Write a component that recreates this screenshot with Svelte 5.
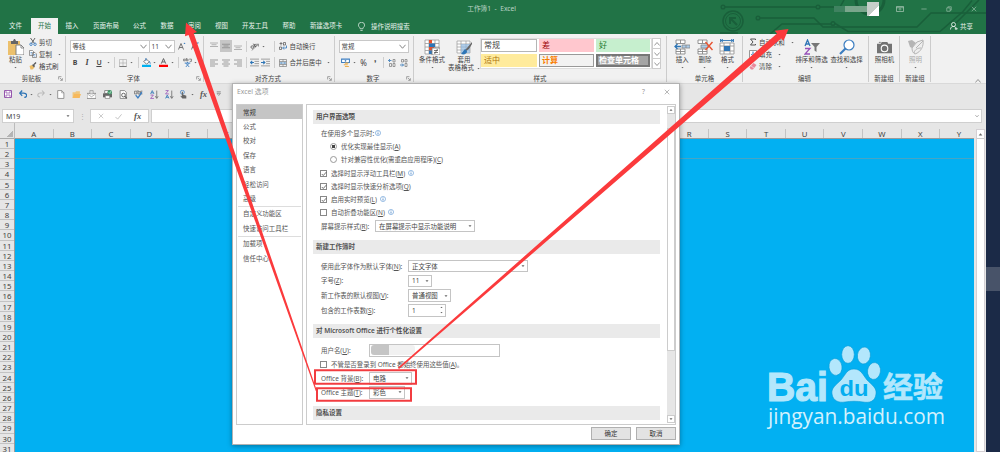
<script lang="ts">
  type Slot = { icon?: string; text?: string; w: number; size?: number; cls?: string };

  const TABS = [
    { label: '文件', w: 31 },
    { label: '开始', w: 27, active: true },
    { label: '插入', w: 28 },
    { label: '页面布局', w: 40 },
    { label: '公式', w: 27 },
    { label: '数据', w: 28 },
    { label: '审阅', w: 27 },
    { label: '视图', w: 27 },
    { label: '开发工具', w: 40 },
    { label: '帮助', w: 28 },
    { label: '新建选项卡', w: 46 },
  ];

  // every icon is drawn on a 16x16 grid
  const ICONS: Record<string, string> = {
    caret: '<path d="M2 5h12l-6 7z" fill="#666"/>',
    chevron: '<path d="M1 4l7 8 7-8" fill="none" stroke="#666" stroke-width="1.8"/>',
    chevronUp: '<path d="M1 12l7-8 7 8" fill="none" stroke="#777" stroke-width="2"/>',
    sep: '<path d="M8 0v16" stroke="#ccc" stroke-width="1.4"/>',
    launcher: '<path d="M2 11V2h9" fill="none" stroke="#777" stroke-width="2"/><path d="M6 6l7 7M14 7v7H7" fill="none" stroke="#777" stroke-width="2"/>',
    paste: '<rect x="0" y="2" width="12" height="14" fill="#ecc06c"/><path d="M3 2h2l1-2h1l1 2h2v3H3z" fill="#666"/><path d="M8 6h5l3 3v7H8z" fill="#fff" stroke="#777" stroke-width=".9"/><path d="M13 6v3h3" fill="none" stroke="#777" stroke-width=".8"/>',
    cut: '<path d="M3 0l8 11M12 0L5 11" stroke="#555" stroke-width="1.8"/><circle cx="4" cy="12.5" r="2.5" fill="none" stroke="#3e7fc2" stroke-width="1.8"/><circle cx="12" cy="12.5" r="2.5" fill="none" stroke="#3e7fc2" stroke-width="1.8"/>',
    copy: '<path d="M1 1h6l2 2v8H1zM7 5h5l3 3v7H7z" fill="#fff" stroke="#666" stroke-width="1.3"/><path d="M3 5h3M3 8h3M9 9h4M9 12h4" stroke="#3e7fc2" stroke-width="1.3"/>',
    brush: '<path d="M1 8l5-2 5 5-4 4-4 0z" fill="#ecbd65"/><path d="M6 6l3-2 3 4-2 3z" fill="#555"/><path d="M10 5l4-4" stroke="#555" stroke-width="2.5"/>',
    growA: '<path d="M1 15L6 3l5 12M3 11h6" fill="none" stroke="#555" stroke-width="1.6"/><path d="M11 4l2-3 2 3z" fill="#3e7fc2"/>',
    shrinkA: '<path d="M1 15L5 5l4 10M3 11h5" fill="none" stroke="#555" stroke-width="1.6"/><path d="M11 1h5l-2.5 3z" fill="#3e7fc2"/>',
    border: '<path d="M1 1h14v14H1zM8 1v14M1 8h14" fill="none" stroke="#aaa" stroke-width="1.2"/><path d="M1 15h14" stroke="#666" stroke-width="1.6"/>',
    fill: '<path d="M3 6l5-4 5 5-5 4z" fill="#fff" stroke="#555" stroke-width="1.3"/><path d="M7 0v5M13 6l2 4" stroke="#3e7fc2" stroke-width="1.8"/><rect y="12" width="16" height="4" fill="#00b0f0"/>',
    fontColor: '<path d="M4 10L8 1l4 9M5.500 7h5" fill="none" stroke="#555" stroke-width="1.6"/><rect y="12" width="16" height="4" fill="#f00"/>',
    phonetic: '<path d="M1 2h3v3H1zM6 0v5h3V2H6M11 2h4v4h-3" fill="none" stroke="#666" stroke-width="1.3"/><path d="M3 9h10M8 7v2M5 9l6 7M11 9l-6 7" fill="none" stroke="#3e7fc2" stroke-width="1.6"/>',
    top: '<path d="M0 2h16M3 5.500h10M0 9h16" stroke="#888" stroke-width="1.2"/>',
    middle: '<path d="M0 4.500h16M3 8h10M0 11.500h16" stroke="#777" stroke-width="1.2"/>',
    bottom: '<path d="M0 8h16M3 11.500h10M0 15h16" stroke="#888" stroke-width="1.2"/>',
    left: '<path d="M0 2h16M0 6h10M0 10h16M0 14h10" stroke="#777" stroke-width="1.4"/>',
    center: '<path d="M0 2h16M3 6h10M0 10h16M3 14h10" stroke="#777" stroke-width="1.4"/>',
    right: '<path d="M0 2h16M6 6h10M0 10h16M6 14h10" stroke="#777" stroke-width="1.4"/>',
    orient: '<path d="M3 15L15 4M11 4h4v4" fill="none" stroke="#777" stroke-width="1.4"/><circle cx="4" cy="9" r="2.300" fill="none" stroke="#555" stroke-width="1.4"/><path d="M6 3l4 6" stroke="#555" stroke-width="1.5"/><circle cx="9" cy="6" r="2" fill="none" stroke="#555" stroke-width="1.3"/>',
    outdent: '<path d="M0 2h16M8 6h8M8 10h8M0 14h16" stroke="#888" stroke-width="1.4"/><path d="M7 8H1M4 5L1 8l3 3" fill="none" stroke="#2e75b6" stroke-width="1.8"/>',
    indent: '<path d="M0 2h16M9 6h7M9 10h7M0 14h16" stroke="#888" stroke-width="1.4"/><path d="M0 8h6M4 5l3 3-3 3" fill="none" stroke="#2e75b6" stroke-width="1.8"/>',
    wrap: '<path d="M4 0v7M1 3h6M8 6h5V1H9v5M1 10v5h4v-5H1" fill="none" stroke="#555" stroke-width="1.4"/><path d="M15 7v5H8M10 9l-3 3 3 3" fill="none" stroke="#2e75b6" stroke-width="1.6"/>',
    merge: '<path d="M1 1h14v14H1zM1 5h14M1 11h14M8 1v4M8 11v4" fill="none" stroke="#777" stroke-width="1.3"/><path d="M3 8h10M5 6L3 8l2 2M11 6l2 2-2 2" fill="none" stroke="#2e75b6" stroke-width="1.3"/>',
    currency: '<path d="M1 2h14v6H1z" fill="#fff" stroke="#3e7fc2" stroke-width="1.8"/><circle cx="8" cy="5" r="1.500" fill="#3e7fc2"/><path d="M7 8h6v2H7zM5 11h7v2H5zM7 14h7v2H7z" fill="#ebaf50"/>',
    decInc: '<path d="M7 3H1M4 0L1 3l3 3" fill="none" stroke="#2e75b6" stroke-width="1.6"/><path d="M10 1h4v5h-4zM3 9h4v6H3zM10 9h4v6h-4z" fill="none" stroke="#777" stroke-width="1.4"/>',
    decDec: '<path d="M3 1h4v5H3zM10 1h4v5h-4zM10 9h4v6h-4z" fill="none" stroke="#777" stroke-width="1.4"/><path d="M0 12h7M4 9l3 3-3 3" fill="none" stroke="#2e75b6" stroke-width="1.6"/>',
    cond: '<path d="M1 1h14v14H1zM1 4.500h14M1 8h14M1 11.500h14M5 1v14M11 1v14" fill="#fff" stroke="#999" stroke-width=".8"/><path d="M5 1h3v3.500H5zM5 8h5v3.500H5z" fill="#e8512f"/><path d="M5 4.500h6V8H5zM5 11.500h3V15H5z" fill="#2e75b6"/><path d="M8 9h8v7H8z" fill="#fff" stroke="#777" stroke-width=".8"/><path d="M10 11.500h4M10 13.500h4M13.500 10l-3 5" stroke="#555" stroke-width=".8"/>',
    table: '<path d="M1 2h13v12H1zM1 5h13M1 8h13M1 11h13M5 2v12M10 2v12" fill="#fff" stroke="#999" stroke-width=".7"/><path d="M5 5h9v9H5z" fill="#8eb8df" opacity=".7"/><path d="M16 3l-5 6-2 2 1 1 3-2 3-5z" fill="#666"/><path d="M9 10l-4 5c3 1 6 0 6-3z" fill="#2e75b6"/>',
    insert: '<path d="M2 1h9v3.500H2zM6.500 1v3.500M2 10h9v5H2zM2 12.500h9M6.500 10v5" fill="#fff" stroke="#888" stroke-width=".9"/><path d="M8 6h8v3H8zM12 6v3" fill="#a9cbea" stroke="#888" stroke-width=".8"/><path d="M7 7.500H1M3.500 5L1 7.500 3.500 10" fill="none" stroke="#2e75b6" stroke-width="1.3"/>',
    remove: '<path d="M1 1h9v3.500H1zM5.500 1v3.500M1 10h9v5H1zM1 12.500h9M5.500 10v5" fill="#fff" stroke="#888" stroke-width=".9"/><path d="M4 6h7v3H4z" fill="#a9cbea" stroke="#888" stroke-width=".8"/><path d="M8.500 3l7 8M15.500 3l-7 8" stroke="#e8512f" stroke-width="1.400"/>',
    format: '<path d="M1 4h14v11H1zM1 7h14M1 12h14M5 4v11M11 4v11" fill="#fff" stroke="#999" stroke-width=".9"/><path d="M5 7h6v5H5z" fill="#2e75b6"/><path d="M2 1.500h12M1.500 0v3M14.500 0v3M4 0L2 1.500 4 3M12 0l2 1.500L12 3" fill="none" stroke="#2e75b6" stroke-width=".9"/>',
    sum: '<path d="M13 4V2H3l5 6-5 6h10v-2" fill="none" stroke="#555" stroke-width="2"/>',
    fillDown: '<path d="M1 1h14v14H1z" fill="#fff" stroke="#777" stroke-width="1.500"/><path d="M8 3v9M4.500 8.500L8 12l3.500-3.500" fill="none" stroke="#2e75b6" stroke-width="2"/>',
    erase: '<path d="M1 11L9 2l6 4-7 9H4z" fill="#e9889a"/><path d="M4 8l6 4" stroke="#fff"/>',
    sort: '<path d="M1 7l2.500-6L6 7M2 5h3" fill="none" stroke="#2e75b6" stroke-width="1.300"/><path d="M1 9.500h5L1 15h5" fill="none" stroke="#9751b8" stroke-width="1.300"/><path d="M7 4h9l-3.500 4v5l-2-1.500V8z" fill="#777"/>',
    find: '<circle cx="10" cy="6" r="5" fill="#fff" stroke="#3b7dc0" stroke-width="1.200"/><path d="M6.500 9.500L1 15" stroke="#3b7dc0" stroke-width="2.200"/>',
    camera: '<path d="M0 4h4l1-2h6l1 2h4v10H0z" fill="#737373"/><circle cx="8" cy="9" r="3.500" fill="#737373" stroke="#fff" stroke-width="1.200"/><path d="M2 2h2v1H2z" fill="#737373"/>',
    lamp: '<path d="M0 2l4-1 4 3-4 5-2-1z" fill="#b5b5b5"/><path d="M4 9l5-6 6-2c1 6-2 12-8 14-2-1-3-3-3-6z" fill="#eee" stroke="#b5b5b5"/><path d="M8 9l7-7M6 14c1-4 4-5 7-5" stroke="#b5b5b5" fill="none"/>',
    save: '<path d="M1 1h14v14H1z" fill="#fff" stroke="#9455ac" stroke-width="2"/><path d="M4 1h8v5H4zM4 10h8v5H4z" fill="#fff" stroke="#9455ac" stroke-width="1.600"/>',
    undo: '<path d="M2 6h7c7 0 7 8 1 8M6 1L1.500 6 6 11" fill="none" stroke="#2e75b6" stroke-width="2.400"/>',
    redo: '<path d="M14 6H7c-7 0-7 8-1 8M10 1l4.500 5L10 11" fill="none" stroke="#bbb" stroke-width="2.200"/>',
    page: '<path d="M3 1h7l4 4v10H3z" fill="#fff" stroke="#777" stroke-width="1.300"/><path d="M10 1v4h4" fill="none" stroke="#777"/>',
    folder: '<path d="M1 4h5l1-2h7v12H1z" fill="#efc67d"/><path d="M4 7h12l-3 7H1z" fill="#f7b95c"/>',
    mail: '<path d="M0 6h16v9H0z" fill="#fff" stroke="#777" stroke-width="1.300"/><path d="M2 8l6 4 6-4" fill="none" stroke="#777"/><path d="M5 1h6v6H5z" fill="#ddd" stroke="#888"/>',
    print: '<path d="M3 1h9v5H3z" fill="#fff" stroke="#666" stroke-width="1.300"/><path d="M0 6h16v7H0z" fill="#666"/><path d="M4 10h8v5H4z" fill="#fff" stroke="#666"/><circle cx="12" cy="4" r="4" fill="#3f9868"/><path d="M10 4l2 2 2-4" fill="none" stroke="#fff"/>',
    preview: '<path d="M2 1h8l3 3v11H2z" fill="#fff" stroke="#777" stroke-width="1.400"/><circle cx="8" cy="9" r="3.300" fill="#fff" stroke="#555" stroke-width="1.500"/><path d="M10 11l4 4" stroke="#555" stroke-width="2"/>',
    spell: '<path d="M1 2h4v5H1zM7 0v7h4V3H7M15 2h-3v5h3" fill="none" stroke="#666" stroke-width="1.300"/><path d="M3 9l4 5 7-10" fill="none" stroke="#3e7fc2" stroke-width="2.400"/>',
    sortAsc: '<path d="M1 7l3-6 3 6M2 5h4" fill="none" stroke="#2e75b6" stroke-width="1.400"/><path d="M1 9h5l-5 6h6" fill="none" stroke="#9751b8" stroke-width="1.400"/><path d="M12 1v13M9.500 11l2.500 4 2.500-4" fill="none" stroke="#666" stroke-width="1.400"/>',
    sortDesc: '<path d="M1 1h5L1 7h6" fill="none" stroke="#9751b8" stroke-width="1.400"/><path d="M1 15l3-6 3 6M2 13h4" fill="none" stroke="#2e75b6" stroke-width="1.400"/><path d="M12 1v13M9.500 11l2.500 4 2.500-4" fill="none" stroke="#666" stroke-width="1.400"/>',
    touch: '<circle cx="6" cy="4" r="3.500" fill="none" stroke="#3e7fc2" stroke-width="1.300"/><path d="M5 3h2v5l6 2v5H6l-4-5 3 1z" fill="#666"/>',
    more: '<path d="M2 2.500h12" stroke="#666" stroke-width="2"/><path d="M3 7h10l-5 6z" fill="#eee" stroke="#666" stroke-width="1.600"/>',
    cancel: '<path d="M2 2l12 12M14 2L2 14" stroke="#bbb" stroke-width="2"/>',
    accept: '<path d="M1 9l5 5 9-11" fill="none" stroke="#bbb" stroke-width="2"/>',
    bulb: '<path d="M5.500 12c0-3-3-3-3-6.500a5.500 5 0 0 1 11 0c0 3.500-3 3.500-3 6.500zM6 15h4" fill="none" stroke="#e5f0e9" stroke-width="1.300"/>',
    person: '<circle cx="7" cy="5" r="4" fill="none" stroke="#fff" stroke-width="1.500"/><path d="M1 15c0-5 3-6 6-6s4 1 5 3M12 11v5M9.500 13.500h6" fill="none" stroke="#fff" stroke-width="1.500"/>',
    winOpts: '<path d="M1 3h14v10H1zM1 5.500h14M8 11V7.500M6 9l2-2 2 2" fill="none" stroke="#b9d1c3" stroke-width="1.300"/>',
    winMin: '<path d="M1 8h14" stroke="#b9d1c3" stroke-width="1.500"/>',
    winRestore: '<path d="M2 5h9v9H2zM5 5V2h9v9h-3" fill="none" stroke="#b9d1c3" stroke-width="1.400"/>',
    winClose: '<path d="M2 2l12 12M14 2L2 14" stroke="#b9d1c3" stroke-width="1.400"/>',
    close: '<path d="M2 2l12 12M14 2L2 14" stroke="#888" stroke-width="1.600"/>',
    up: '<path d="M2 11h12L8 4z" fill="#666"/>',
    info: '<circle cx="8" cy="8" r="6.800" fill="#fff" stroke="#6b9fd6" stroke-width="1.800"/><path d="M8 7v5M8 4v1.700" stroke="#3f7fc4" stroke-width="2.200"/>',
    check: '<path d="M2 8l4 4 8-9" fill="none" stroke="#555" stroke-width="2.200"/>',
  };

  const QAT: Slot[] = [
    { icon: 'save', w: 16, size: 8 },
    { icon: 'undo', w: 14, size: 8.5 },
    { icon: 'caret', w: 3, size: 3 },
    { icon: 'redo', w: 16, size: 8 },
    { icon: 'caret', w: 3, size: 3 },
    { icon: 'page', w: 16, size: 9 },
    { icon: 'folder', w: 16, size: 9 },
    { icon: 'mail', w: 15.5, size: 9 },
    { icon: 'print', w: 15.5, size: 9 },
    { icon: 'preview', w: 16, size: 9 },
    { icon: 'spell', w: 15.5, size: 9 },
    { icon: 'sortAsc', w: 15.5, size: 9 },
    { icon: 'sortDesc', w: 15, size: 9 },
    { icon: 'touch', w: 12, size: 9 },
    { icon: 'caret', w: 6, size: 3 },
    { text: 'fx', w: 17, cls: 'fx' },
    { icon: 'more', w: 13, size: 5.5 },
  ];

  const FONT_ROW: Slot[] = [
    { text: 'B', w: 10, cls: 'b' },
    { text: 'I', w: 14, cls: 'i' },
    { text: 'U', w: 10, cls: 'u' },
    { icon: 'caret', w: 8, size: 3 },
    { icon: 'sep', w: 5, size: 11 },
    { icon: 'border', w: 11, size: 8 },
    { icon: 'caret', w: 7, size: 3 },
    { icon: 'sep', w: 6, size: 11 },
    { icon: 'fill', w: 10, size: 9 },
    { icon: 'caret', w: 6, size: 3 },
    { icon: 'fontColor', w: 13, size: 9 },
    { icon: 'caret', w: 5, size: 3 },
    { icon: 'sep', w: 6, size: 11 },
    { icon: 'phonetic', w: 12, size: 9 },
    { icon: 'caret', w: 5, size: 3 },
  ];

  const ALIGN_TOP: Slot[] = [
    { icon: 'top', w: 12, size: 8 },
    { icon: 'middle', w: 12, size: 8, cls: 'on' },
    { icon: 'bottom', w: 12, size: 8 },
    { icon: 'sep', w: 5, size: 11 },
    { icon: 'orient', w: 11, size: 9 },
    { icon: 'caret', w: 6, size: 3 },
    { w: 5 },
    { icon: 'sep', w: 6, size: 11 },
    { icon: 'wrap', w: 12, size: 8 },
    { text: '自动换行', w: 27 },
  ];

  const ALIGN_BOTTOM: Slot[] = [
    { icon: 'left', w: 12, size: 8 },
    { icon: 'center', w: 12, size: 8 },
    { icon: 'right', w: 12, size: 8 },
    { icon: 'sep', w: 5, size: 11 },
    { icon: 'outdent', w: 11, size: 9 },
    { icon: 'indent', w: 11, size: 9 },
    { icon: 'sep', w: 6, size: 11 },
    { icon: 'merge', w: 12, size: 8 },
    { text: '合并后居中', w: 33 },
    { icon: 'caret', w: 12, size: 3 },
  ];

  const NUMBER_ROW: Slot[] = [
    { icon: 'currency', w: 13, size: 9 },
    { icon: 'caret', w: 5, size: 3 },
    { text: '%', w: 13, cls: 'pct' },
    { text: '❜', w: 10, cls: 'pct' },
    { icon: 'sep', w: 6, size: 11 },
    { icon: 'decInc', w: 12, size: 8 },
    { icon: 'decDec', w: 12, size: 8 },
  ];

  const STYLES = [
    { name: '常规', cls: 'normal' },
    { name: '差', cls: 'bad' },
    { name: '好', cls: 'good' },
    { name: '适中', cls: 'neutral' },
    { name: '计算', cls: 'calc' },
    { name: '检查单元格', cls: 'checkcell' },
  ];

  const NAV = [
    ['常规', '公式', '校对', '保存', '语言', '轻松访问', '高级'],
    ['自定义功能区', '快速访问工具栏'],
    ['加载项', '信任中心'],
  ];

  const columns = 'ABCDEFGHIJKLMNOPQRSTUVWXY'.split('');
  const rows = Array.from({ length: 31 }, (_, i) => i + 1);

  let section = $state('常规');
  let floating = $state(true);
  let quick = $state(true);
  let preview = $state(true);
  let collapse = $state(false);
  let always = $state(false);
</script>

{#snippet icon(name: string, size = 8)}
  <svg class="icon" width={size} height={size} viewBox="0 0 16 16">{@html ICONS[name]}</svg>
{/snippet}

{#snippet slots(items: Slot[])}
  <div class="slots">
    {#each items as s}
      <span class="slot {s.cls ?? ''}" style:width="{s.w}px">
        {#if s.icon}{@render icon(s.icon, s.size)}{:else}{s.text ?? ''}{/if}
      </span>
    {/each}
  </div>
{/snippet}

{#snippet big(name: string, label: string, caret = true, size = 16)}
  <div class="big">
    <span class="pic">{@render icon(name, size)}</span>
    <span>{label}</span>
    {#if caret}{@render icon('caret', 3)}{/if}
  </div>
{/snippet}

{#snippet small(name: string, label: string, caret = false)}
  <div class="small">{@render icon(name, 8)}<span>{label}</span>{#if caret}{@render icon('caret', 3)}{/if}</div>
{/snippet}

{#snippet checkbox(on: boolean, toggle: () => void)}
  <button class="box" role="checkbox" aria-checked={on} aria-label="option" onclick={toggle}>
    {#if on}{@render icon('check', 6)}{/if}
  </button>
{/snippet}

<main>
  <div class="window">
    <header>
      <svg class="circuit" width="266" height="34" viewBox="720 0 266 34" fill="none" stroke="#195f3a" stroke-width="1.5">
        <circle cx="733" cy="21" r="10" /><circle cx="733" cy="21" r="7.500" stroke-width="1" />
        <path d="M737 25l-7-7M730 24v-6h6" stroke-width="2" />
        <circle cx="723" cy="7" r="1.800" /><path d="M725 7h91M820 7h20l4-7" />
        <circle cx="818" cy="7" r="1.800" />
        <circle cx="758" cy="18" r="1.800" /><path d="M760 18h54l9 9h94l14-14h55" />
        <circle cx="833" cy="23.500" r="1.800" /><path d="M770 34l12-10h49M835 23.500l13 8h92l23-20 9-11M953 26l26-26M720 33h18" />
        <path d="M856 0a14 14 0 0 0 28 0" stroke-width="3" />
      </svg>
      <div class="titlebar">
        <span class="title">工作簿1&nbsp; -&nbsp; Excel</span>
        <span class="account"><i></i><i></i><i></i><b></b></span>
        <span class="win">{@render icon('winOpts', 8)}</span>
        <span class="win">{@render icon('winMin', 6)}</span>
        <span class="win">{@render icon('winRestore', 6)}</span>
        <span class="win">{@render icon('winClose', 6)}</span>
      </div>
      <nav class="tabs">
        {#each TABS as tab}
          <span class:active={tab.active} style:width="{tab.w}px">{tab.label}</span>
        {/each}
        <span class="tell">{@render icon('bulb', 9)}操作说明搜索</span>
        <span class="share">{@render icon('person', 8)}共享</span>
      </nav>
    </header>

    <div class="ribbon">
      <section>
        <div class="body">
          <div class="paste">{@render big('paste', '粘贴')}</div>
          <div class="stack">
            {@render small('cut', '剪切')}
            {@render small('copy', '复制', true)}
            {@render small('brush', '格式刷')}
          </div>
        </div>
        <footer>剪贴板<i>{@render icon('launcher', 5)}</i></footer>
      </section>
      <section>
        <div class="body rows">
          <div class="line">
            <span class="combo font">等线{@render icon('chevron', 7)}</span>
            <span class="combo pt">11{@render icon('chevron', 7)}</span>
            <span class="slot letter">{@render icon('growA', 8)}</span>
            <span class="slot letter">{@render icon('shrinkA', 8)}</span>
          </div>
          {@render slots(FONT_ROW)}
        </div>
        <footer>字体<i>{@render icon('launcher', 5)}</i></footer>
      </section>
      <section>
        <div class="body rows">
          {@render slots(ALIGN_TOP)}
          {@render slots(ALIGN_BOTTOM)}
        </div>
        <footer>对齐方式<i>{@render icon('launcher', 5)}</i></footer>
      </section>
      <section>
        <div class="body rows">
          <span class="combo number">常规{@render icon('chevron', 7)}</span>
          {@render slots(NUMBER_ROW)}
        </div>
        <footer>数字<i>{@render icon('launcher', 5)}</i></footer>
      </section>
      <section class="styles">
        <div class="body">
          {@render big('cond', '条件格式')}
          <div class="big">
            <span class="pic">{@render icon('table', 16)}</span>
            <span>套用</span>
            <span class="second">表格格式 {@render icon('caret', 3)}</span>
          </div>
          <div class="gallery">
            {#each STYLES as s}
              <span class={s.cls}>{s.name}</span>
            {/each}
          </div>
          <div class="scroller">
            <span>{@render icon('chevronUp', 6)}</span>
            <span>{@render icon('chevron', 6)}</span>
            <span>{@render icon('chevron', 6)}</span>
          </div>
        </div>
        <footer>样式</footer>
      </section>
      <section class="cells">
        <div class="body">
          {@render big('insert', '插入')}
          {@render big('remove', '删除')}
          {@render big('format', '格式')}
        </div>
        <footer>单元格</footer>
      </section>
      <section class="edit">
        <div class="body">
          <div class="stack">
            {@render small('sum', '自动求和', true)}
            {@render small('fillDown', '填充', true)}
            {@render small('erase', '清除', true)}
          </div>
          {@render big('sort', '排序和筛选')}
          {@render big('find', '查找和选择')}
        </div>
        <footer>编辑</footer>
      </section>
      <section class="single">
        <div class="body">{@render big('camera', '照相机', false, 15)}</div>
        <footer>新建组</footer>
      </section>
      <section class="single off">
        <div class="body">{@render big('lamp', '照明')}</div>
        <footer>新建组</footer>
      </section>
      <span class="fold">{@render icon('chevronUp', 6)}</span>
    </div>

    <div class="qat">{@render slots(QAT)}</div>

    <div class="formula">
      <span class="namebox">M19{@render icon('caret', 4)}</span>
      <span class="grip">⋮</span>
      <span class="fnbox">{@render icon('cancel', 6)}{@render icon('accept', 7)}<em>fx</em></span>
      <span class="input">{@render icon('chevron', 4)}</span>
    </div>

    <div class="sheet">
      <div class="corner"></div>
      <div class="cols">
        {#each columns as c}<span>{c}</span>{/each}
      </div>
      <div class="vscroll"><span>{@render icon('up', 5)}</span></div>
      <div class="nums">
        {#each rows as r}<span>{r}</span>{/each}
      </div>
      <div class="grid"><div class="freeze"></div></div>
    </div>
  </div>
  <aside><div></div></aside>

  <svg class="mark" width="190" height="94" viewBox="762 340 190 94" fill="#b3e7fc">
    <g stroke="#b3e7fc" stroke-width="1.2">
      <text x="767" y="400.500" font-size="41" font-weight="700" textLength="61" lengthAdjust="spacingAndGlyphs">Bai</text>
      <text class="cjk" x="883" y="398" font-size="29" font-weight="700" textLength="60" lengthAdjust="spacingAndGlyphs" stroke-width=".6">经验</text>
    </g>
    <g stroke="#079bd6" stroke-width=".6">
      <ellipse cx="835.500" cy="367" rx="6.500" ry="8.500" transform="rotate(-8 835 367)" />
      <ellipse cx="848" cy="354.500" rx="6.300" ry="8.800" />
      <ellipse cx="864" cy="355.500" rx="6.500" ry="8.500" transform="rotate(8 864 355)" />
      <ellipse cx="874" cy="371" rx="6.500" ry="8.500" transform="rotate(8 874 371)" />
      <path d="M854 369c7 0 9 6 13 11 5 5 10 8 9 14-1 8-7 9-13 8-6-1-12-1-18 0-6 1-12-1-13-8-1-6 4-9 9-14 5-6 6-11 13-11z" />
    </g>
    <text x="839.500" y="396" font-size="22" font-weight="700" fill="#04aef0" textLength="29" lengthAdjust="spacingAndGlyphs">du</text>
    <text class="url" x="768" y="424" font-size="21" textLength="177" lengthAdjust="spacingAndGlyphs">jingyan.baidu.com</text>
  </svg>

  <div class="dialog" role="dialog" aria-label="Excel 选项">
    <div class="caption">
      <span>Excel 选项</span><span class="help">?</span>{@render icon('close', 6)}
    </div>
    <div class="panes">
      <nav class="side">
        {#each NAV as part}
          <div class="part">
            {#each part as item}
              <button class:selected={section === item} onclick={() => (section = item)}>{item}</button>
            {/each}
          </div>
        {/each}
      </nav>
      <div class="content">
        <div class="options">
          <div class="block ui">
            <h3>用户界面选项</h3>
            <div class="row">在使用多个显示时:{@render icon('info', 6)}</div>
            <div class="row radio"><i class="on"></i>优化实现最佳显示(<u>A</u>)</div>
            <div class="row radio"><i></i>针对兼容性优化(需重启应用程序)(<u>C</u>)</div>
            <div class="row">{@render checkbox(floating, () => (floating = !floating))}选择时显示浮动工具栏(<u>M</u>)&nbsp;{@render icon('info', 6)}</div>
            <div class="row">{@render checkbox(quick, () => (quick = !quick))}选择时显示快速分析选项(<u>Q</u>)</div>
            <div class="row">{@render checkbox(preview, () => (preview = !preview))}启用实时预览(<u>L</u>)&nbsp;{@render icon('info', 6)}</div>
            <div class="row">{@render checkbox(collapse, () => (collapse = !collapse))}自动折叠功能区(<u>N</u>)&nbsp;{@render icon('info', 6)}</div>
            <div class="row"><label class="tip">屏幕提示样式(<u>R</u>):</label><span class="select w100">在屏幕提示中显示功能说明{@render icon('caret', 4)}</span></div>
          </div>
          <div class="block book">
            <h3>新建工作簿时</h3>
            <div class="row"><label>使用此字体作为默认字体(<u>N</u>):</label><span class="select w119">正文字体{@render icon('caret', 4)}</span></div>
            <div class="row"><label>字号(<u>Z</u>):</label><span class="select w24">11{@render icon('caret', 4)}</span></div>
            <div class="row"><label>新工作表的默认视图(<u>V</u>):</label><span class="select w42">普通视图{@render icon('caret', 4)}</span></div>
            <div class="row"><label>包含的工作表数(<u>S</u>):</label><span class="select w38">1<b>{@render icon('up', 3)}{@render icon('caret', 3)}</b></span></div>
          </div>
          <div class="block office">
            <h3>对 Microsoft Office 进行个性化设置</h3>
            <div class="row"><label class="short">用户名(<u>U</u>):</label><span class="select w131"><i class="smudge"></i></span></div>
            <div class="row">{@render checkbox(always, () => (always = !always))}不管是否登录到 Office 都始终使用这些值(<u>A</u>)。</div>
            <div class="row"><label class="short">Office 背景(<u>B</u>):</label><span class="select w42">电路{@render icon('caret', 4)}</span></div>
            <div class="row"><label class="short">Office 主题(<u>T</u>):</label><span class="select w36">彩色{@render icon('caret', 4)}</span></div>
          </div>
          <div class="block">
            <h3>隐私设置</h3>
          </div>
        </div>
        <div class="bar">
          <span>{@render icon('up', 4)}</span>
          <div class="track"><div class="thumb"></div></div>
          <span>{@render icon('caret', 4)}</span>
        </div>
      </div>
    </div>
    <div class="actions">
      <button>确定</button>
      <button>取消</button>
    </div>
  </div>

  <svg class="notes" width="1000" height="452" viewBox="0 0 1000 452" fill="#fb3a3c">
    <path d="M186 22.500l11 9.500-3.300 1.200 L317 391h-1.200L188.600 35l-3.600 1.200z" />
    <path d="M788.500 29l-5 12-2.400-2.600L399 369l-1-1.200L777 33.400l-2.300-2.600z" />
    <path d="M315 370.200h101v13.600H315zM317 388.200h94v12.600h-94z" fill="none" stroke="#f23c40" stroke-width="2" />
  </svg>
</main>

<style>
  :global(body) {
    background: #1b2a47;
    overflow: hidden;
  }

  main {
    position: relative;
    display: flex;
    width: 1000px;
    height: 452px;
    overflow: hidden;
    background: #1b2a47;
    font: 6.45px/9px 'Noto Sans', 'Noto Sans CJK SC', sans-serif;
    color: #444;
    white-space: nowrap;
  }

  button {
    font: inherit;
    color: inherit;
    padding: 0;
    margin: 0;
    border: 0;
    border-radius: 0;
    background: none;
  }

  .icon {
    display: block;
    flex: none;
  }

  .window {
    width: 986px;
    height: 452px;
    background: #e6e6e6;
    display: flex;
    flex-direction: column;
  }

  aside {
    flex: 1;
    padding-top: 267px;
  }

  aside div {
    height: 24px;
    background: #485369;
  }

  header {
    position: relative;
    height: 34px;
    background: #217346;
    color: #e8f2ec;
    flex: none;
  }

  .circuit {
    position: absolute;
    right: 0;
    top: 0;
  }

  .titlebar {
    position: relative;
    height: 18px;
    display: flex;
    align-items: center;
    justify-content: flex-end;
  }

  .title {
    color: #bdd4c6;
    width: 50px;
    margin-top: -2px;
    margin-right: 317px;
    font-size: 6.7px;
  }

  .account {
    display: flex;
    width: 45px;
    margin-right: 8px;
    align-items: center;
  }

  .account i {
    width: 11px;
    height: 6px;
    background: #3f8260;
  }

  .account i + i {
    background: #7aa68c;
  }

  .account b {
    width: 12px;
    height: 14px;
    background: linear-gradient(135deg, #c6cec9 60%, #fff 60%);
  }

  .win {
    width: 24.7px;
    display: flex;
    justify-content: center;
  }

  .tabs {
    position: relative;
    height: 16px;
    display: flex;
    align-items: center;
  }

  .tabs > span {
    height: 16px;
    line-height: 15px;
    text-align: center;
  }

  .tabs .active {
    background: #f1f1f1;
    color: #217346;
  }

  .tabs .tell,
  .tabs .share {
    display: flex;
    align-items: center;
    gap: 5px;
    padding-left: 8px;
  }

  .tabs .share {
    margin-left: auto;
    margin-right: 13px;
    gap: 2px;
  }

  .ribbon {
    position: relative;
    display: grid;
    grid-template-columns: 66px 138px 131px 79px 253px 76px 126px 31px 31px 1fr;
    height: 50px;
    flex: none;
    background: #f1f1f1;
    border-bottom: 1px solid #d9d9d9;
    box-sizing: border-box;
  }

  .ribbon section {
    display: flex;
    flex-direction: column;
    background: linear-gradient(#ccc, #ccc) right 2px / 1px 46px no-repeat;
  }

  .body {
    display: flex;
    height: 39px;
    flex: none;
  }

  .body.rows {
    flex-direction: column;
    padding: 4px 0 0 4px;
    height: 35px;
  }

  footer {
    display: flex;
    justify-content: center;
    line-height: 11px;
    padding-right: 10px;
  }

  footer i {
    width: 0;
    margin-left: auto;
    margin-right: -2px;
    align-self: center;
  }

  footer:has(i)::before {
    content: '';
    margin-right: auto;
    width: 5px;
  }

  .styles footer,
  .cells footer,
  .edit footer,
  .single footer {
    padding-right: 1px;
  }

  .edit footer {
    padding-right: 3px;
  }

  .slots,
  .line {
    display: flex;
    align-items: center;
    height: 16.5px;
  }

  .qat .slots {
    height: 20px;
  }

  .slot {
    display: flex;
    align-items: center;
    justify-content: center;
    flex: none;
    height: 12px;
  }

  .slot.on {
    background: #c6c6c6;
  }

  .slot.b {
    font-weight: 700;
    font-size: 7px;
  }

  .slot.i {
    font-style: italic;
    font-family: 'Liberation Serif', serif;
    font-weight: 700;
    font-size: 8px;
  }

  .slot.u {
    text-decoration: underline;
    font-weight: 600;
    font-size: 7px;
  }

  .slot.pct {
    font-size: 8px;
  }

  .slot.fx,
  em {
    font: italic 700 8.5px 'Liberation Serif', serif;
    color: #555;
  }

  .letter {
    width: 12.5px;
  }

  .combo {
    display: flex;
    align-items: center;
    justify-content: space-between;
    box-sizing: border-box;
    height: 13px;
    padding: 0 2px 0 1.5px;
    background: #fff;
    border: 1px solid #c8c8c8;
  }

  .combo.font {
    width: 80px;
  }

  .combo.pt {
    width: 26px;
    margin-left: -1px;
    margin-right: 1px;
  }

  .combo.number {
    width: 70px;
    margin: 2px 0 1.5px;
  }

  .paste {
    width: 27px;
    padding-left: 2px;
  }

  .paste .big {
    width: 27px;
  }

  .stack {
    padding-top: 2px;
  }

  .small {
    display: flex;
    align-items: center;
    height: 12.2px;
    gap: 2px;
  }

  .small > span + :global(.icon) {
    margin-left: 4px;
  }

  .big {
    display: flex;
    flex-direction: column;
    align-items: center;
    flex: none;
    line-height: 8px;
    padding-top: 4px;
    box-sizing: border-box;
  }

  .pic {
    height: 18px;
    display: flex;
    align-items: center;
  }

  .big > :global(.icon) {
    margin-top: 2px;
  }

  .second {
    display: flex;
    align-items: center;
    gap: 3px;
  }

  .styles .body {
    padding-left: 2px;
  }

  .styles .big {
    width: 32px;
  }

  .gallery {
    display: grid;
    grid-template-columns: 57px 56px 55px;
    grid-template-rows: 14px 14px;
    gap: 1px;
    margin: 4px 0 0;
    height: 31px;
    background: #fff;
    border: 1px solid #ddd;
    box-sizing: border-box;
    font-size: 8px;
    flex: none;
  }

  .gallery span {
    line-height: 10px;
    padding-left: 2px;
    border: 1px solid transparent;
    box-sizing: border-box;
    height: 13px;
    margin-right: 1px;
  }

  .gallery .normal {
    border: 1.5px solid #b5b5b5;
  }

  .gallery .bad {
    background: #ffc7ce;
    color: #9c0006;
  }

  .gallery .good {
    background: #c6efce;
    color: #247a2c;
  }

  .gallery .neutral {
    background: #ffeb9c;
    color: #ae7510;
  }

  .gallery .calc {
    background: #f2f2f2;
    color: #fa7d00;
    border-color: #999;
    font-weight: 700;
  }

  .gallery .checkcell {
    background: #a5a5a5;
    color: #fff;
    border: 2px solid #777;
    line-height: 8px;
    padding-left: 1px;
    font-weight: 700;
  }

  .scroller {
    margin-top: 4px;
    width: 9px;
    height: 31px;
    display: grid;
    background: #fff;
    border: 1px solid #ccc;
    box-sizing: border-box;
  }

  .scroller span {
    display: grid;
    place-items: center;
  }

  .scroller span + span {
    border-top: 1px solid #ccc;
  }

  .cells .body {
    padding-left: 4px;
  }

  .cells .big {
    width: 22.6px;
  }

  .edit .stack {
    width: 45px;
    padding-left: 6px;
  }

  .edit .big {
    width: 35px;
  }

  .single .big {
    width: 31px;
  }

  .off .big {
    color: #aaa;
  }

  .fold {
    align-self: end;
    justify-self: end;
    margin: 0 5px 0 0;
  }

  .qat {
    height: 25px;
    flex: none;
  }

  .formula {
    display: flex;
    height: 14px;
    padding: 0 4px 0 2px;
    flex: none;
    font-size: 7px;
  }

  .formula > span {
    display: flex;
    align-items: center;
    box-sizing: border-box;
    border: 1px solid #cfcfcf;
    background: #fff;
  }

  .formula .namebox {
    width: 72px;
    padding: 0 3px;
    justify-content: space-between;
  }

  .formula .grip {
    width: 16px;
    border: 0;
    background: none;
    justify-content: center;
    color: #aaa;
  }

  .formula .fnbox {
    width: 59px;
    justify-content: space-around;
    padding: 0 1px;
  }

  .formula .input {
    flex: 1;
    margin-left: 2px;
    justify-content: flex-end;
    padding-right: 2px;
  }

  .sheet {
    display: grid;
    grid-template-columns: 15px 959px 12px;
    grid-template-rows: 16px 313px;
    font-size: 7.8px;
  }

  .corner {
    background: linear-gradient(135deg, transparent 50%, #b4b4b4 50%) 7px 8px / 6px 6px no-repeat;
    border-right: 1px solid #bbb;
    border-bottom: 1px solid #aaa;
  }

  .cols {
    display: flex;
    padding-top: 6px;
    border-bottom: 1px solid #9b9b9b;
    overflow: hidden;
  }

  .cols span {
    flex: none;
    width: 38.55px;
    box-sizing: border-box;
    text-align: center;
    line-height: 11px;
    border-right: 1px solid #c3c3c3;
  }

  .vscroll {
    grid-row: 1 / 3;
    grid-column: 3;
    margin: 6px 1px 0 2px;
    border: 1px solid #d4d0d4;
    background: #fff;
  }

  .vscroll span {
    display: grid;
    place-items: center;
    height: 8px;
    border-bottom: 1px solid #ccc;
  }

  .nums {
    border-right: 1px solid #9b9b9b;
    overflow: hidden;
  }

  .nums span {
    display: block;
    box-sizing: border-box;
    height: 10.16px;
    line-height: 10.5px;
    text-align: center;
    border-bottom: 1px solid #c3c3c3;
  }

  .grid {
    background: #02b0f2;
  }

  .freeze {
    height: 19px;
    border-bottom: 1px solid #46a5c4;
  }

  .mark,
  .notes {
    position: absolute;
    left: 0;
    top: 0;
    pointer-events: none;
  }

  .mark {
    left: 762px;
    top: 340px;
    font-family: 'Liberation Sans', sans-serif;
  }

  .mark .cjk {
    font-family: 'Noto Sans CJK SC', sans-serif;
  }

  .mark .url {
    font-family: 'Open Sans', sans-serif;
    fill: #d3f1fd;
  }

  .dialog {
    position: absolute;
    left: 232px;
    top: 83px;
    width: 448px;
    height: 362px;
    box-sizing: border-box;
    background: #fff;
    border: 1px solid #b2b2b2;
    box-shadow: 0 1px 5px rgba(0, 0, 0, 0.35);
    color: #555;
  }

  .caption {
    display: flex;
    align-items: center;
    height: 20px;
    box-sizing: border-box;
    padding: 0 9px 5px 4px;
    font-size: 6.8px;
    color: #999;
  }

  .caption .help {
    margin-left: auto;
    margin-right: 19px;
  }

  .panes {
    display: flex;
    gap: 3px;
    padding: 0 3px;
    height: 321px;
  }

  .side {
    width: 67px;
    box-sizing: border-box;
    border: 1px solid #ccc;
    flex: none;
  }

  .side button {
    display: block;
    width: 100%;
    height: 14.4px;
    padding-left: 6px;
    text-align: left;
  }

  .side .selected {
    background: #c5c5c5;
    color: #333;
  }

  .part + .part {
    border-top: 1px solid #ddd;
    margin: 0 1px;
  }

  .part + .part button {
    padding-left: 5px;
  }

  .content {
    flex: 1;
    display: flex;
    justify-content: space-between;
    border: 1px solid #ccc;
    box-sizing: border-box;
  }

  .options {
    width: 347px;
    padding: 5px 0 0 6px;
  }

  .block.ui {
    height: 130.3px;
  }

  .block.book {
    height: 84px;
  }

  .block.office {
    height: 82px;
  }

  h3 {
    margin: 0;
    height: 14px;
    line-height: 13px;
    padding-left: 3px;
    background: #eaeaea;
    font-size: 6.5px;
    font-weight: 600;
    color: #505050;
  }

  .ui h3 {
    margin-bottom: 2.5px;
  }

  .book h3 {
    margin-bottom: 4.6px;
  }

  .office h3 {
    margin-bottom: 5px;
  }

  .row {
    display: flex;
    align-items: center;
    height: 13.3px;
    padding-left: 8px;
  }

  .book .row {
    height: 14.7px;
  }

  .office .row {
    height: 14px;
  }

  .row > :global(.icon) {
    margin: -1px 0 0 1px;
  }

  .row label {
    width: 87px;
  }

  .row .tip {
    width: 54px;
  }

  .row .short {
    width: 48px;
  }

  .radio {
    padding-left: 17px;
  }

  .radio i {
    width: 7px;
    height: 7px;
    box-sizing: border-box;
    border: 1px solid #999;
    border-radius: 50%;
    margin-right: 4px;
  }

  .radio .on {
    background: radial-gradient(circle, #444 45%, #fff 55%);
  }

  .box {
    display: grid;
    place-items: center;
    width: 7px;
    height: 7px;
    box-sizing: border-box;
    border: 1px solid #888;
    margin: 0 4px 0 -1px;
    flex: none;
  }

  .select {
    display: flex;
    align-items: center;
    justify-content: space-between;
    height: 12.5px;
    box-sizing: border-box;
    border: 1px solid #c4c4c4;
    padding: 0 2px 0 3px;
    color: #444;
  }

  .select b {
    display: grid;
    gap: 2px;
  }

  .w100 { width: 100px; }
  .w119 { width: 120px; }
  .w24 { width: 24px; }
  .w42 { width: 42.5px; }
  .w38 { width: 38px; }
  .w131 { width: 131px; }
  .w36 { width: 36px; }

  .smudge {
    width: 44px;
    height: 10px;
    margin-left: -2px;
    background: linear-gradient(90deg, #c5c5c5 40%, #f1f1f1 40%);
    border-radius: 3px;
  }

  .bar {
    display: flex;
    flex-direction: column;
    width: 8px;
    padding: 1px 0;
  }

  .bar span {
    display: grid;
    place-items: center;
    height: 8px;
    box-sizing: border-box;
    border: 1px solid #ccc;
  }

  .track {
    flex: 1;
    padding-top: 14px;
    background: #e6e6e6;
  }

  .thumb {
    height: 223px;
    background: #fff;
    border: 1px solid #ccc;
    box-sizing: border-box;
  }

  .actions {
    display: flex;
    justify-content: flex-end;
    gap: 5px;
    padding: 2px 3px 0;
  }

  .actions button {
    width: 40px;
    height: 13px;
    line-height: 10px;
    background: #e3e3e3;
    border: 1px solid #b0b0b0;
    color: #333;
  }
</style>
